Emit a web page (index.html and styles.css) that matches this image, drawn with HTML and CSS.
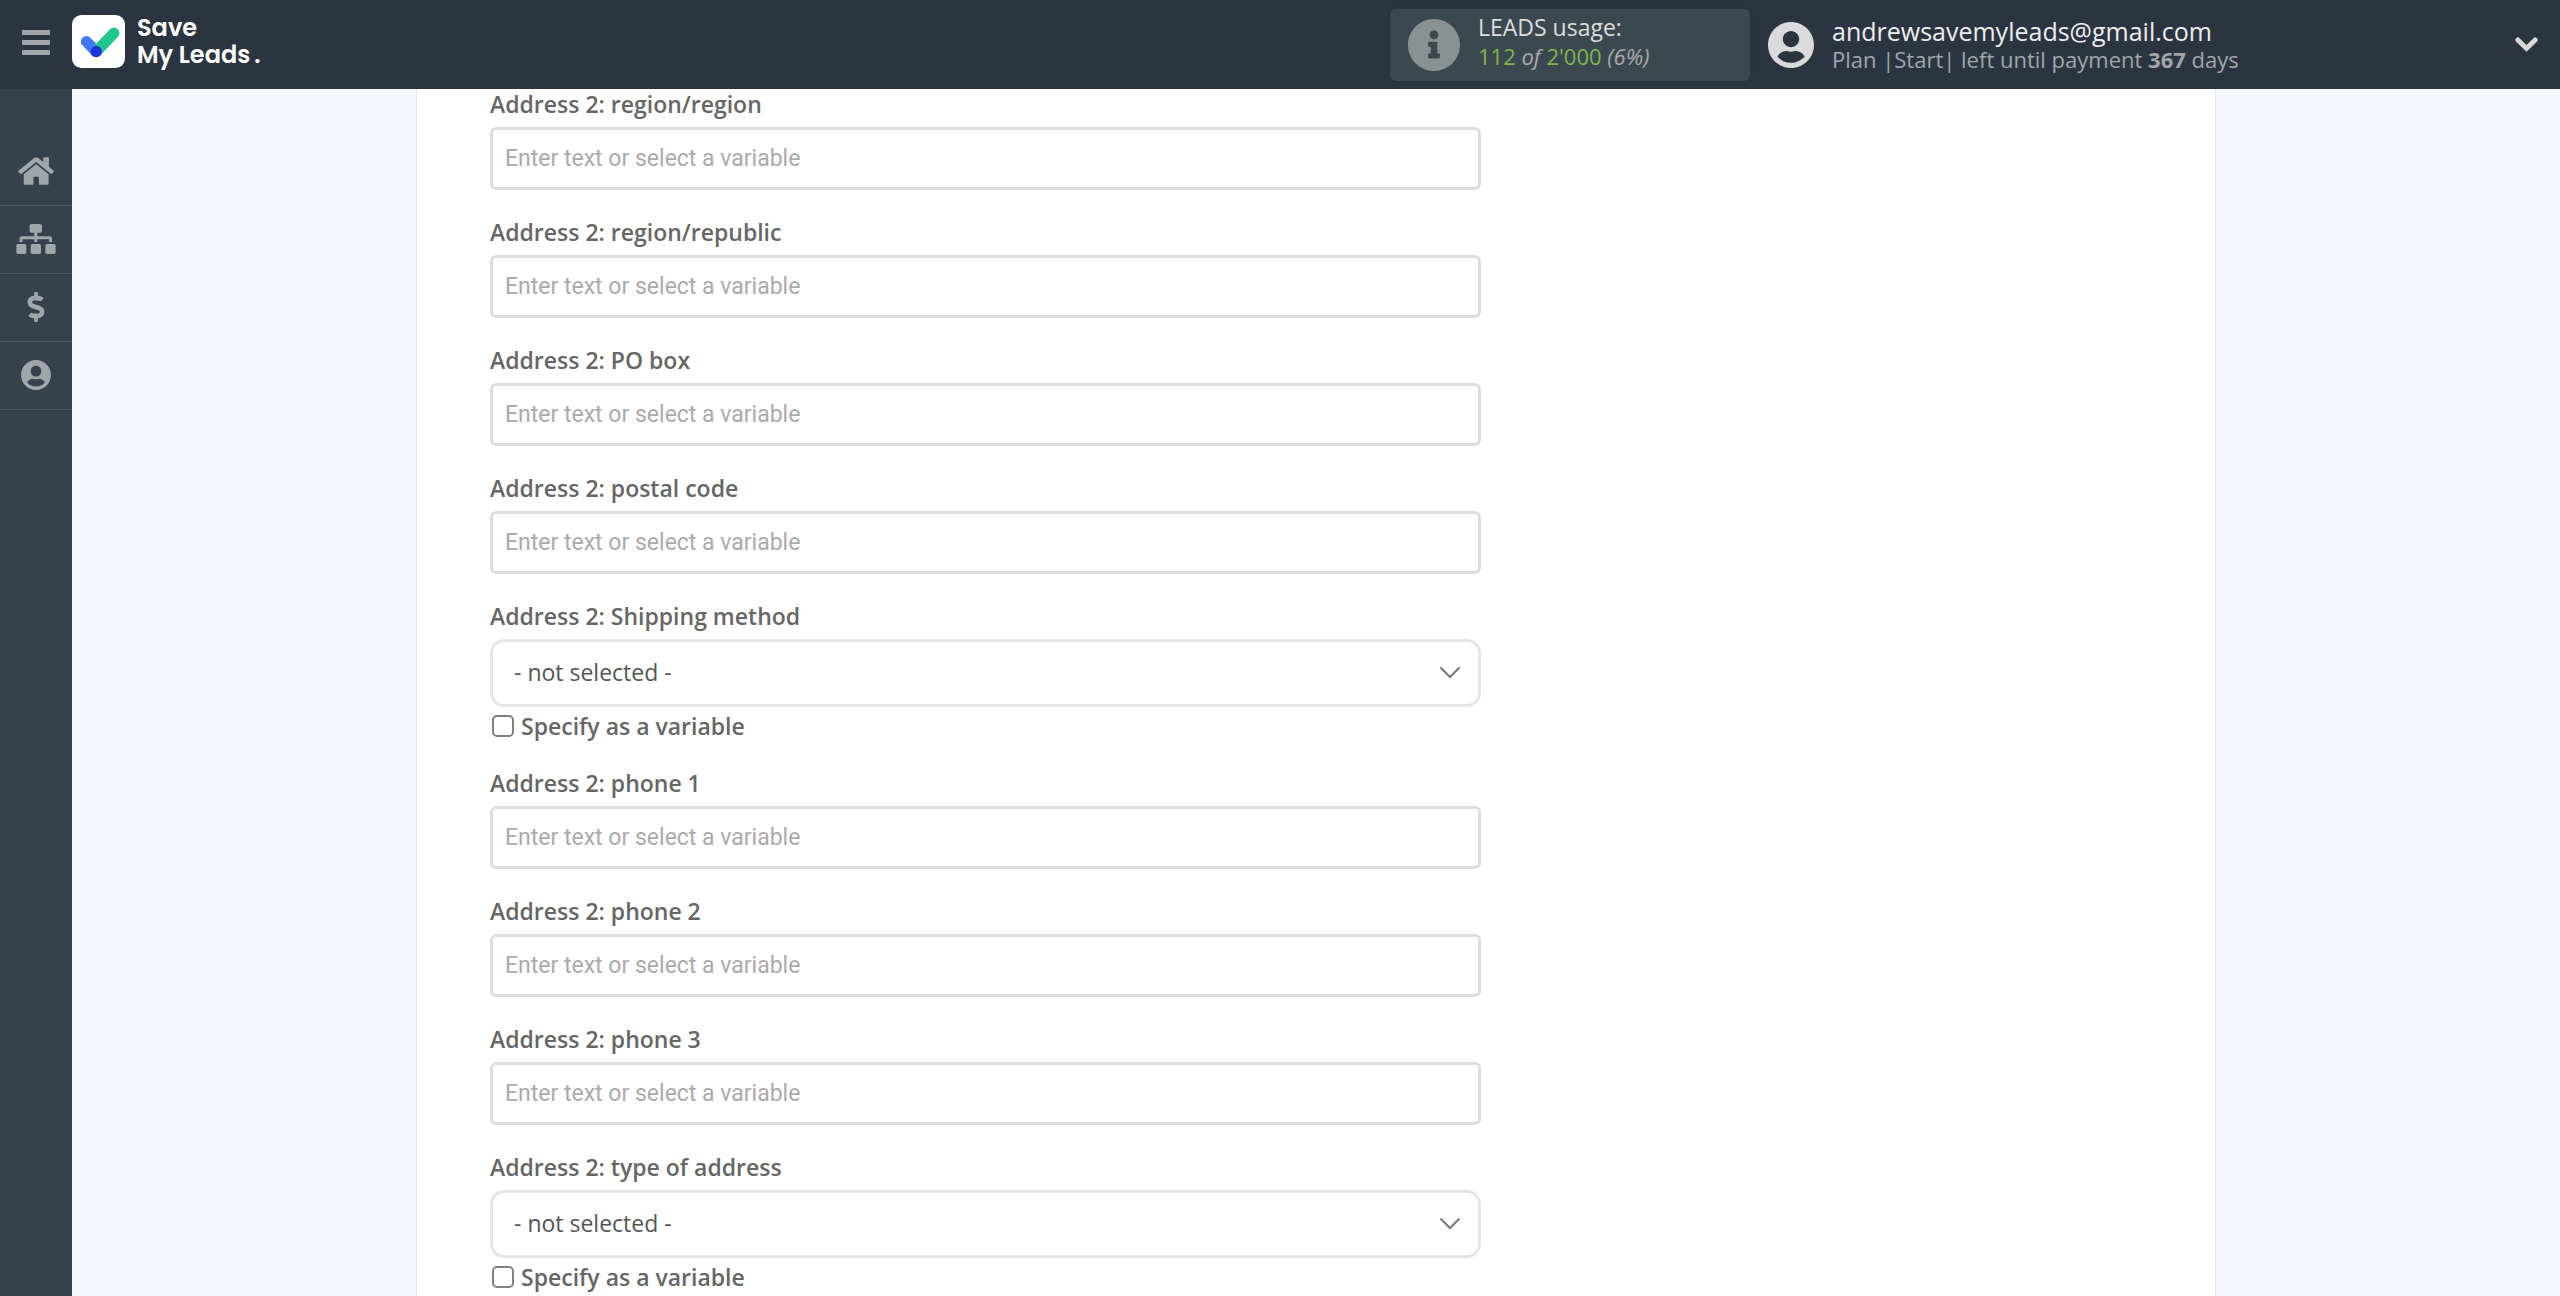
FILE: index.html
```html
<!DOCTYPE html>
<html lang="en">
<head>
    <meta charset="UTF-8">
    <meta name="viewport" content="width=device-width, initial-scale=1.0">
    <title>Save My Leads</title>
    <link rel="stylesheet" href="styles.css">
</head>
<body>

    <header class="header">
        <button class="menu-toggle" type="button" aria-label="Menu">
            <span class="bar"></span>
            <span class="bar"></span>
            <span class="bar"></span>
        </button>

        <a class="logo" href="#">
            <svg class="logo-mark" viewBox="0 0 158 158" aria-hidden="true">
                <rect width="158" height="158" rx="28" fill="#fff"/>
                <g fill="none" stroke-width="33" stroke-linecap="round">
                    <path d="M43 79L72 109" stroke="#4477ff"/>
                    <path d="M72 109L125 54" stroke="#21c58e"/>
                </g>
                <circle cx="72" cy="109" r="17" fill="#1b34d8"/>
            </svg>
            <span class="logo-text">Save<br>My Leads<span class="logo-dot">.</span></span>
        </a>

        <div class="usage">
            <svg class="usage-icon" viewBox="8 8 496 496" aria-hidden="true"><path fill="currentColor" d="M256 8C119.043 8 8 119.083 8 256c0 136.997 111.043 248 248 248s248-111.003 248-248C504 119.083 392.957 8 256 8zm0 110c23.196 0 42 18.804 42 42s-18.804 42-42 42-42-18.804-42-42 18.804-42 42-42zm56 254c0 6.627-5.373 12-12 12h-88c-6.627 0-12-5.373-12-12v-24c0-6.627 5.373-12 12-12h12v-64h-12c-6.627 0-12-5.373-12-12v-24c0-6.627 5.373-12 12-12h64c6.627 0 12 5.373 12 12v100h12c6.627 0 12 5.373 12 12v24z"/></svg>
            <div class="usage-text">
                <div class="usage-title">LEADS usage:</div>
                <div class="usage-count"><b>112</b> <i>of</i> <b>2'000</b> <i>(6%)</i></div>
            </div>
        </div>

        <button class="account" type="button">
            <svg class="account-icon" viewBox="0 8 496 496" aria-hidden="true"><path fill="currentColor" d="M248 8C111 8 0 119 0 256s111 248 248 248 248-111 248-248S385 8 248 8zm0 96c48.6 0 88 39.4 88 88s-39.4 88-88 88-88-39.4-88-88 39.4-88 88-88zm0 344c-58.7 0-111.3-26.6-146.5-68.2 18.8-35.4 55.6-59.8 98.5-59.8 2.4 0 4.8.4 7.1 1.1 13 4.2 26.6 6.9 40.9 6.9 14.3 0 28-2.7 40.9-6.9 2.3-.7 4.7-1.1 7.1-1.1 42.9 0 79.7 24.4 98.5 59.8C359.3 421.4 306.7 448 248 448z"/></svg>
            <span class="account-text">
                <span class="account-email">andrewsavemyleads@gmail.com</span>
                <span class="account-plan">Plan |Start| left until payment <strong>367</strong> days</span>
            </span>
            <svg class="account-arrow" viewBox="0 0 69 46" aria-hidden="true"><path d="M8 9L34.500 35L61 9" fill="none" stroke="currentColor" stroke-width="15" stroke-linecap="round"/></svg>
        </button>
    </header>

    <div class="shell">
        <nav class="sidebar">
            <a class="sidebar-link" href="#" aria-label="Home">
                <svg width="36" height="28" viewBox="55 470 107 82" aria-hidden="true">
                    <path fill="currentColor" d="M109 491L146 521V549Q146 552 143 552H117V528H101V552H75Q72 552 72 549V521Z"/>
                    <path fill="currentColor" d="M103 472Q109 468 115 472L130 484V473Q130 470 133 470H144Q147 470 147 473V498L161 510Q163 512 161 514L156 519Q154 521 152 519L109 484L66 519Q64 521 62 519L56 514Q54 512 56 510Z"/>
                </svg>
            </a>
            <a class="sidebar-link" href="#" aria-label="Connections">
                <svg width="40" height="30" viewBox="51 282 118 90" aria-hidden="true">
                    <g fill="currentColor">
                        <rect x="91" y="282" width="37" height="26" rx="5"/>
                        <rect x="51" y="342" width="30" height="30" rx="5"/>
                        <rect x="94" y="342" width="31" height="30" rx="5"/>
                        <rect x="138" y="342" width="31" height="30" rx="5"/>
                    </g>
                    <path d="M109.500 306V336M65 336V327Q65 323 69 323H150Q154 323 154 327V336" fill="none" stroke="currentColor" stroke-width="9"/>
                </svg>
            </a>
            <a class="sidebar-link" href="#" aria-label="Billing">
                <svg width="18" height="30" viewBox="0 0 288 512" aria-hidden="true"><path fill="currentColor" d="M209.2 233.4l-108-31.6C88.7 198.2 80 186.5 80 173.5c0-16.3 13.2-29.5 29.5-29.5h66.3c12.2 0 24.2 3.7 34.2 10.5 6.1 4.1 14.3 3.1 19.5-2l34.8-34c7.1-6.9 6.1-18.4-1.8-24.500C238 74.8 207.4 64.1 176 64V16c0-8.8-7.2-16-16-16h-32c-8.8 0-16 7.2-16 16v48h-2.500C45.8 64-5.4 118.7.5 183.6c4.2 46.1 39.4 83.6 83.8 96.6l102.5 30c12.5 3.7 21.2 15.3 21.2 28.3 0 16.3-13.2 29.5-29.5 29.5h-66.3C100 368 88 364.3 78 357.5c-6.1-4.1-14.3-3.1-19.5 2l-34.8 34c-7.1 6.9-6.1 18.4 1.8 24.5 24.5 19.2 55.1 29.9 86.5 30v48c0 8.8 7.2 16 16 16h32c8.8 0 16-7.2 16-16v-48.2c46.6-.9 90.3-28.6 105.7-72.7 21.5-61.6-14.6-124.8-72.500-141.7z"/></svg>
            </a>
            <a class="sidebar-link" href="#" aria-label="Profile">
                <svg width="30" height="30" viewBox="0 8 496 496" aria-hidden="true"><path fill="currentColor" d="M248 8C111 8 0 119 0 256s111 248 248 248 248-111 248-248S385 8 248 8zm0 96c48.6 0 88 39.4 88 88s-39.4 88-88 88-88-39.4-88-88 39.4-88 88-88zm0 344c-58.7 0-111.3-26.6-146.5-68.2 18.8-35.4 55.6-59.8 98.5-59.8 2.4 0 4.8.4 7.1 1.1 13 4.2 26.6 6.9 40.9 6.9 14.3 0 28-2.7 40.9-6.9 2.3-.7 4.7-1.1 7.1-1.1 42.9 0 79.7 24.4 98.5 59.8C359.3 421.4 306.7 448 248 448z"/></svg>
            </a>
        </nav>

        <main class="content">
            <form class="card">
                <div class="field">
                    <label for="region">Address 2: region/region</label>
                    <input class="text-input" id="region" type="text" placeholder="Enter text or select a variable">
                </div>
                <div class="field">
                    <label for="republic">Address 2: region/republic</label>
                    <input class="text-input" id="republic" type="text" placeholder="Enter text or select a variable">
                </div>
                <div class="field">
                    <label for="pobox">Address 2: PO box</label>
                    <input class="text-input" id="pobox" type="text" placeholder="Enter text or select a variable">
                </div>
                <div class="field">
                    <label for="postal">Address 2: postal code</label>
                    <input class="text-input" id="postal" type="text" placeholder="Enter text or select a variable">
                </div>
                <div class="field">
                    <label for="shipping">Address 2: Shipping method</label>
                    <div class="select-wrap">
                        <select class="select" id="shipping">
                            <option>- not selected -</option>
                        </select>
                        <svg class="select-arrow" viewBox="0 0 20 12" aria-hidden="true"><path d="M1 1L10 10L19 1"/></svg>
                    </div>
                    <label class="check"><input type="checkbox"> Specify as a variable</label>
                </div>
                <div class="field">
                    <label for="phone1">Address 2: phone 1</label>
                    <input class="text-input" id="phone1" type="text" placeholder="Enter text or select a variable">
                </div>
                <div class="field">
                    <label for="phone2">Address 2: phone 2</label>
                    <input class="text-input" id="phone2" type="text" placeholder="Enter text or select a variable">
                </div>
                <div class="field">
                    <label for="phone3">Address 2: phone 3</label>
                    <input class="text-input" id="phone3" type="text" placeholder="Enter text or select a variable">
                </div>
                <div class="field">
                    <label for="type">Address 2: type of address</label>
                    <div class="select-wrap">
                        <select class="select" id="type">
                            <option>- not selected -</option>
                        </select>
                        <svg class="select-arrow" viewBox="0 0 20 12" aria-hidden="true"><path d="M1 1L10 10L19 1"/></svg>
                    </div>
                    <label class="check"><input type="checkbox"> Specify as a variable</label>
                </div>
            </form>
        </main>
    </div>

</body>
</html>
```
FILE: styles.css
```css
* {
    box-sizing: border-box;
}

body {
    margin: 0;
    min-height: 100vh;
    display: flex;
    flex-direction: column;
    font-family: "Open Sans", sans-serif;
    font-size: 23px;
    color: #666;
    background-color: #f4f7fc;
}

button {
    padding: 0;
    border: none;
    background: none;
    font: inherit;
    color: inherit;
    text-align: left;
    cursor: pointer;
}

/* Header */
.header {
    display: flex;
    align-items: center;
    height: 89px;
    background-color: #2b3541;
}

.menu-toggle {
    width: 72px;
    display: flex;
    flex-direction: column;
    align-items: center;
    gap: 5px;
    padding-bottom: 4px;
}

.bar {
    width: 28px;
    height: 5px;
    border-radius: 1px;
    background-color: #a0a6aa;
}

.logo {
    display: flex;
    align-items: center;
    gap: 12px;
    margin-right: auto;
    padding-bottom: 7px;
    color: #fff;
    text-decoration: none;
}

.logo-mark {
    width: 53px;
    height: 53px;
}

.logo-text {
    font-family: Poppins, Inter, sans-serif;
    font-size: 24px;
    font-weight: 600;
    line-height: 27px;
}

.logo-dot {
    margin-left: 4px;
}

.usage {
    display: flex;
    align-items: center;
    gap: 18px;
    width: 360px;
    height: 72px;
    padding: 0 18px;
    border-radius: 6px;
    background-color: #3c4850;
    box-shadow: 0 0 8px rgba(0, 0, 0, 0.1);
}

.usage-icon {
    width: 52px;
    height: 52px;
    color: #8a9193;
}

.usage-text {
    padding-bottom: 8px;
}

.usage-title {
    line-height: 30px;
    color: #ddd;
}

.usage-count {
    font-size: 22px;
    line-height: 28px;
    color: #aaa;
}

.usage-count b {
    font-weight: 400;
    color: #7fb749;
}

.account {
    display: flex;
    align-items: center;
    gap: 18px;
    width: 810px;
    padding: 0 22px 0 18px;
}

.account-icon {
    width: 46px;
    height: 46px;
    color: #dadada;
}

.account-text {
    flex: 1;
    display: flex;
    flex-direction: column;
}

.account-email {
    font-size: 25px;
    line-height: 28px;
    color: #eee;
}

.account-plan {
    font-size: 22px;
    line-height: 28px;
    color: #a0a6aa;
}

.account-arrow {
    width: 23px;
    height: 15px;
    color: #dadada;
}

/* Sidebar */
.shell {
    flex: 1;
    display: flex;
}

.sidebar {
    width: 72px;
    padding-top: 49px;
    background-color: #36414e;
}

.sidebar-link {
    display: flex;
    align-items: center;
    justify-content: center;
    height: 68px;
    padding-bottom: 2px;
    border-bottom: 1px solid #4a5561;
    color: #a0a6aa;
}

/* Form */
.content {
    flex: 1;
    display: flex;
    justify-content: center;
}

.card {
    width: 100%;
    max-width: 1800px;
    padding: 0 73px;
    border: solid #e4e7ea;
    border-width: 0 1px;
    background-color: #fff;
}

.field {
    width: 60%;
    margin-bottom: 27px;
}

.field:last-child {
    margin-bottom: 0;
}

.field label {
    display: block;
    margin-bottom: 8px;
    font-weight: 600;
    line-height: 30px;
}

.text-input {
    display: block;
    width: 100%;
    height: 63px;
    padding: 0 12px;
    border: 3px solid #ddd;
    border-radius: 6px;
    background-color: #fff;
    font-family: Roboto, sans-serif;
    font-size: 23px;
    color: #555;
}

.text-input::placeholder {
    color: #aaa;
}

.select-wrap {
    display: grid;
    align-items: center;
}

.select {
    grid-area: 1 / 1;
    appearance: none;
    width: 100%;
    height: 68px;
    padding: 0 60px 2px 21px;
    border: 3px solid #e6e6e8;
    border-radius: 14px;
    background-color: #fff;
    font-family: "Open Sans", sans-serif;
    font-size: 23px;
    color: #555;
}

.select-arrow {
    grid-area: 1 / 1;
    justify-self: end;
    width: 20px;
    height: 12px;
    margin-right: 21px;
    fill: none;
    stroke: #777;
    stroke-width: 2;
    stroke-linecap: round;
    overflow: visible;
    pointer-events: none;
}

.field .check {
    display: flex;
    align-items: center;
    gap: 7px;
    margin: 0;
    padding: 4px 0 0 2px;
}

.check input {
    appearance: none;
    width: 22px;
    height: 22px;
    margin: 0;
    border: 2px solid #808080;
    border-radius: 5px;
    background-color: #fff;
}
```
